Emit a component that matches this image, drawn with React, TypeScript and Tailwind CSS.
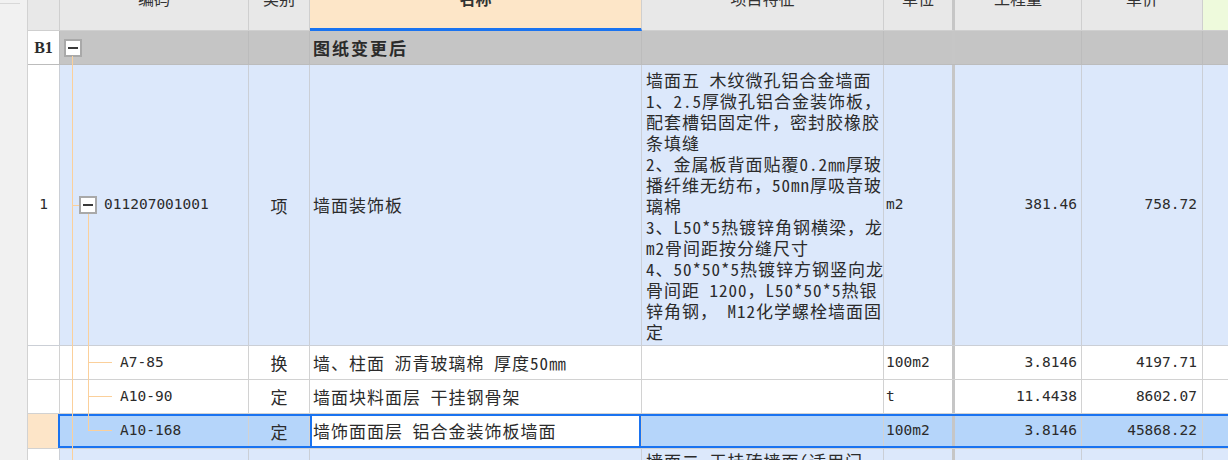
import React from "react";

const cjk = "font-['Noto_Sans_Mono_CJK_SC','Noto_Sans_CJK_SC',sans-serif]";
const mono = "font-['DejaVu_Sans_Mono','Noto_Sans_CJK_SC',monospace]";

function Box() {
  return (
    <div className="w-[18px] h-[18px] box-border border-2 border-[#a9a9a9] bg-white flex items-center justify-center shrink-0">
      <div className="w-[10px] h-[2px] bg-[#3a3a3a]" />
    </div>
  );
}

const featLines = [
  "墙面五 木纹微孔铝合金墙面",
  "1、2.5厚微孔铝合金装饰板，",
  "配套槽铝固定件，密封胶橡胶",
  "条填缝",
  "2、金属板背面贴覆0.2㎜厚玻",
  "播纤维无纺布，50mn厚吸音玻",
  "璃棉",
  "3、L50*5热镀锌角钢横梁，龙",
  "m2骨间距按分缝尺寸",
  "4、50*50*5热镀锌方钢竖向龙",
  "骨间距 1200，L50*50*5热银",
  "锌角钢， M12化学螺栓墙面固",
  "定",
];

function Header() {
  const base =
    "shrink-0 box-border h-full border-r border-b border-[#cfcfcf] bg-[#e8e8e8] flex justify-center items-start overflow-hidden";
  const t = `${cjk} text-[16px] leading-[18px] -mt-[11px] text-[#333]`;
  return (
    <div className="flex h-[31px] shrink-0">
      <div className={`${base} w-[32px]`} />
      <div className={`${base} w-[189px]`}><span className={t}>编码</span></div>
      <div className={`${base} w-[61px]`}><span className={t}>类别</span></div>
      <div className="shrink-0 box-border h-full w-[332px] border-r border-[#cfcfcf] border-b-[3px] border-b-[#1a73f0] bg-[#fde6c8] flex justify-center items-start overflow-hidden">
        <span className={`${t} font-bold`}>名称</span>
      </div>
      <div className={`${base} w-[242px]`}><span className={t}>项目特征</span></div>
      <div className="shrink-0 box-border h-full w-[71px] border-r-[3px] border-r-[#c6c6c6] border-b border-b-[#cfcfcf] bg-[#e8e8e8] flex justify-center items-start overflow-hidden">
        <span className={t}>单位</span>
      </div>
      <div className={`${base} w-[127px]`}><span className={t}>工程量</span></div>
      <div className={`${base} w-[121px]`}><span className={t}>单价</span></div>
      <div className="flex-1 box-border h-full border-b border-[#cfcfcf] bg-[#eefadc]" />
    </div>
  );
}

type RowProps = {
  h: string;
  bg: string;
  numBg?: string;
  num?: React.ReactNode;
  code?: React.ReactNode;
  type?: string;
  name?: React.ReactNode;
  nameCls?: string;
  feat?: React.ReactNode;
  unit?: string;
  qty?: string;
  price?: string;
  line: string;
  selected?: boolean;
};

function Row(p: RowProps) {
  const c = `shrink-0 box-border h-full border-r ${p.line} flex items-center overflow-hidden`;
  return (
    <div className={`relative flex shrink-0 box-border border-b ${p.line} ${p.h}`}>
      <div className={`${c} w-[32px] ${p.numBg ?? "bg-white"} justify-center`}>{p.num}</div>
      <div className={`${c} w-[189px] ${p.bg}`}>{p.code}</div>
      <div className={`${c} w-[61px] ${p.bg} justify-center`}>
        <span className={`${cjk} text-[17px] leading-[21px]`}>{p.type}</span>
      </div>
      <div className={`${c} w-[332px] ${p.nameCls ?? p.bg} pl-[3px] relative`}>
        {p.name}
        {p.selected && <div className="absolute inset-0 border-2 border-[#1a73f0]" />}
      </div>
      <div className={`shrink-0 box-border h-full border-r ${p.line} w-[242px] ${p.bg} overflow-hidden`}>{p.feat}</div>
      <div className={`shrink-0 box-border h-full border-r-[3px] border-r-[#c6c6c6] w-[71px] ${p.bg} flex items-center pl-[2px]`}>
        <span className={`${mono} text-[14.5px]`}>{p.unit}</span>
      </div>
      <div className={`${c} w-[127px] ${p.bg} justify-end pr-[4px]`}>
        <span className={`${mono} text-[14.5px]`}>{p.qty}</span>
      </div>
      <div className={`${c} w-[121px] ${p.bg} justify-end pr-[5px]`}>
        <span className={`${mono} text-[14.5px]`}>{p.price}</span>
      </div>
      <div className={`flex-1 h-full ${p.bg}`} />
      {p.selected && (
        <div className="absolute left-[30px] top-0 bottom-0 -right-[6px] border-2 border-[#1a73f0] pointer-events-none" />
      )}
    </div>
  );
}

function Child({ code, type, name, unit, qty, price, selected }: { code: string; type: string; name: string; unit: string; qty: string; price: string; selected?: boolean }) {
  return (
    <Row
      h={selected ? "h-[35px]" : "h-[34px]"}
      bg={selected ? "bg-[#b5d5fa]" : "bg-white"}
      numBg={selected ? "bg-[#fde5c8]" : "bg-white"}
      line="border-[#d2d2d2]"
      code={<span className={`${mono} text-[14.5px] pl-[60px]`}>{code}</span>}
      type={type}
      name={<span className={`${cjk} text-[17px] tracking-[1px] whitespace-nowrap`}>{name}</span>}
      nameCls={selected ? "bg-white" : undefined}
      unit={unit}
      qty={qty}
      price={price}
      selected={selected}
    />
  );
}

export default function App() {
  return (
    <div className="relative w-[1228px] h-[460px] overflow-hidden flex bg-white text-[#2b2b2b]">
      <div className="w-[28px] shrink-0 box-border bg-[#f1f1f1] border-r border-[#d2d2d2] pt-[3px]">
        <div className="h-px w-[20px] bg-[#d8d8d8]" />
      </div>
      <div className="flex-1 min-w-0 flex flex-col">
        <Header />
        <Row
          h="h-[34px]"
          bg="bg-[#c5c5c5]"
          line="border-[#bcbcbc]"
          num={<span className="font-['Liberation_Serif',serif] font-bold text-[16px]">B1</span>}
          code={<div className="pl-[4px]"><Box /></div>}
          name={<span className={`${cjk} text-[17px] tracking-[2px] font-bold`}>图纸变更后</span>}
        />
        <Row
          h="h-[281px]"
          bg="bg-[#dce8fb]"
          line="border-[#cbcfd6]"
          num={<span className={`${mono} text-[14.5px]`}>1</span>}
          code={
            <div className="flex items-center pl-[19px] gap-[7px]">
              <Box />
              <span className={`${mono} text-[14.5px]`}>011207001001</span>
            </div>
          }
          type="项"
          name={<span className={`${cjk} text-[17px] tracking-[1px]`}>墙面装饰板</span>}
          feat={
            <div className={`${cjk} text-[17px] tracking-[1px] leading-[21px] pl-[4px] pt-[4px] whitespace-nowrap`}>
              {featLines.map((l, i) => (
                <div key={i}>{l}</div>
              ))}
            </div>
          }
          unit="m2"
          qty="381.46"
          price="758.72"
        />
        <Child code="A7-85" type="换" name="墙、柱面 沥青玻璃棉 厚度50㎜" unit="100m2" qty="3.8146" price="4197.71" />
        <Child code="A10-90" type="定" name="墙面块料面层 干挂钢骨架" unit="t" qty="11.4438" price="8602.07" />
        <Child code="A10-168" type="定" name="墙饰面面层 铝合金装饰板墙面" unit="100m2" qty="3.8146" price="45868.22" selected />
        <Row
          h="h-[60px]"
          bg="bg-[#dce8fb]"
          line="border-[#cbcfd6]"
          feat={
            <div className={`${cjk} text-[17px] tracking-[1px] leading-[21px] pl-[4px] pt-[1px] whitespace-nowrap`}>
              墙面二 干挂砖墙面(适用门
            </div>
          }
        />
      </div>
      <svg className="absolute left-0 top-0 pointer-events-none" width="1228" height="460" shapeRendering="crispEdges">
        <g stroke="#fbd09b" strokeWidth="1">
          <line x1="72.5" y1="56" x2="72.5" y2="460" />
          <line x1="72" y1="205.5" x2="79" y2="205.5" />
          <line x1="88.5" y1="214" x2="88.5" y2="431" />
          <line x1="88" y1="362.5" x2="112" y2="362.5" />
          <line x1="88" y1="396.5" x2="112" y2="396.5" />
          <line x1="88" y1="430.5" x2="112" y2="430.5" />
        </g>
      </svg>
    </div>
  );
}
